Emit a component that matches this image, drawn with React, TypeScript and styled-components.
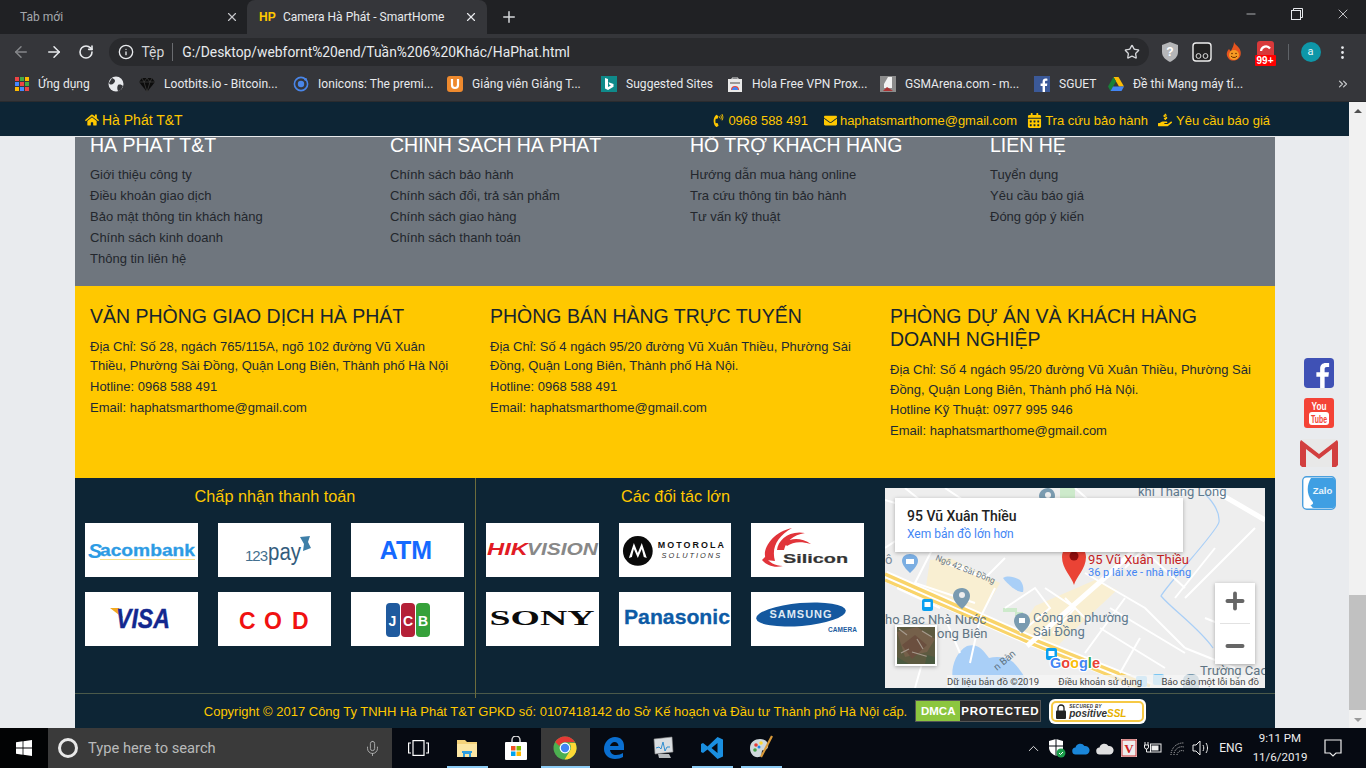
import React from "react";
import styled, { createGlobalStyle } from "styled-components";
import { ArrowLeft, ArrowRight, RotateCw, Info, Star, X, Plus, Minus, MoreVertical, ChevronsRight, ChevronUp, Mic } from "lucide-react";
import { FaHome, FaPhoneVolume, FaEnvelope, FaCalendarAlt, FaHandHoldingUsd } from "react-icons/fa";

const GlobalStyle = createGlobalStyle`
  html, body { margin: 0; padding: 0; overflow: hidden; background: #000; }
  * { box-sizing: border-box; }
`;

const UI = `Roboto, "Noto Sans", sans-serif`;
const WEB = `"Liberation Sans", Arial, sans-serif`;
const GOLD = "#ffc800";
const NAVY = "#0d2535";

const Screen = styled.div`
  width: 1366px; height: 768px; display: flex; flex-direction: column; overflow: hidden;
  font-family: ${WEB}; font-size: 13px;
`;
const TabStrip = styled.div`
  height: 34px; background: #202124; display: flex; align-items: stretch; color: #e8eaed; font: 12px ${UI};
`;
const Tab = styled.div<{ $active?: boolean }>`
  width: ${p => (p.$active ? 240 : 247)}px; display: flex; align-items: center;
  padding: ${p => (p.$active ? "0 9px 0 12px" : "0 8px 0 20px")};
  background: ${p => (p.$active ? "#35363a" : "transparent")};
  border-radius: 8px 8px 0 0; color: ${p => (p.$active ? "#e8eaed" : "#a5a8ad")};
`;
const TabTitle = styled.span`flex: 1; white-space: nowrap;`;
const Fav = styled.b`width: 24px; color: ${GOLD}; font: 700 12px ${WEB};`;
const NewTab = styled.div`width: 44px; display: flex; align-items: center; justify-content: center;`;
const WinControls = styled.div`margin-left: auto; display: flex;`;
const WinBtn = styled.div`width: 46px; display: flex; align-items: center; justify-content: center; padding-bottom: 6px;`;
const Toolbar = styled.div`
  height: 34px; background: #35363a; display: flex; align-items: center; padding: 2px 5px 0; color: #e8eaed;
`;
const NavBtn = styled.div<{ $dim?: boolean }>`
  width: 32.5px; display: flex; justify-content: center; color: ${p => (p.$dim ? "#85878a" : "#e8eaed")};
`;
const Omni = styled.div`
  margin-left: 6px; margin-right: 5px; width: 1040px; height: 28px; border-radius: 14px; background: #292a2d;
  display: flex; align-items: center; padding: 0 9px; font: 13.85px ${UI}; color: #e8eaed;
`;
const OmniDim = styled.span`margin-left: 8px; color: #d5d7da;`;
const OmniSep = styled.span`width: 1px; height: 18px; background: #6a6c70; margin: 0 9px 0 8px;`;
const OmniUrl = styled.span`flex: 1; white-space: nowrap;`;
const Ext = styled.div`width: 32px; display: flex; justify-content: center; align-items: center; position: relative;`;
const Badge = styled.span`
  position: absolute; left: 5px; top: 10px; width: 21px; height: 11px; background: #f00; color: #fff;
  font: 700 10px/11px ${WEB}; text-align: center; border-radius: 1px;
`;
const ToolSep = styled.span`width: 1px; height: 16px; background: #5f6368; margin: 0 12px 0 6px;`;
const Avatar = styled.span`
  width: 20px; height: 20px; border-radius: 50%; background: #0e97a8; color: #e8f6f8; font: 11px/19px ${UI}; text-align: center; margin-right: 6px;
`;
const Bookmarks = styled.div`
  height: 34px; background: #35363a; display: flex; align-items: center; padding: 0 0 2px 15px; color: #e8eaed;
  font: 12px ${UI}; letter-spacing: .05px; border-bottom: 1px solid #2a2b2e;
`;
const Mark = styled.div<{ $w: number }>`
  width: ${p => p.$w}px; display: flex; align-items: center; gap: 9px; white-space: nowrap;
`;
const MarkMore = styled.div`margin-left: 8px; color: #c8cacc; display: flex;`;
const Viewport = styled.div`flex: 1; display: flex; min-height: 0; position: relative;`;
const Page = styled.div`flex: 1; background: #e9ebee; display: flex; flex-direction: column; overflow: hidden; position: relative;`;
const TopNav = styled.nav`
  height: 35px; flex: none; background: ${NAVY}; border-bottom: 1px solid #e8eaec; color: ${GOLD};
  display: flex; align-items: center; padding: 2px 79px 0 85px; position: relative; z-index: 2;
`;
const Brand = styled.span`display: flex; align-items: center; gap: 3px; font-size: 14px;`;
const NavLinks = styled.div`margin-left: auto; display: flex; align-items: center; gap: 10px;`;
const NavLink = styled.span<{ $gap?: number; $after?: number }>`
  display: flex; align-items: center; gap: ${p => p.$gap ?? 3}px; white-space: nowrap; margin-right: ${p => p.$after ?? 0}px;
`;
const Container = styled.main`width: 1200px; margin-left: 75px;`;
const Gray = styled.section`
  background: #6f767e; height: 149px; display: grid; grid-template-columns: repeat(4, 300px);
`;
const LinkCol = styled.div`padding: 0 15px;`;
const LinkHead = styled.h3`
  margin: -3px 0 7px; font: 400 19.5px/23.4px ${WEB}; color: #fff; text-transform: uppercase;
`;
const LinkItem = styled.div`line-height: 21px; color: #23272d;`;
const Yellow = styled.section`
  background: ${GOLD}; height: 192px; padding-top: 19px; display: grid; grid-template-columns: repeat(3, 400px); color: #1d2a33;
`;
const Office = styled.div`padding: 0 15px;`;
const OfficeHead = styled.h3`margin: 0 0 8.5px; font: 400 19.5px/23.4px ${WEB}; text-transform: uppercase; color: #17242e;`;
const Address = styled.div`line-height: 19.5px;`;
const Line = styled.div`line-height: 21px;`;
const Partners = styled.section`
  background: ${NAVY}; height: 215px; display: grid; grid-template-columns: 400px 400px 400px;
`;
const LogoCol = styled.div<{ $divider?: boolean }>`
  padding: 8px 10px 0; border-left: ${p => (p.$divider ? "1px solid #6c6c3c" : "0")};
`;
const LogoTitle = styled.div`
  color: ${GOLD}; font-size: 16.25px; line-height: 20px; text-align: center; margin-bottom: 17px;
`;
const LogoGrid = styled.div<{ $mid?: number }>`
  display: grid; grid-template-columns: 113px ${p => p.$mid ?? 113}px 113px; column-gap: 20px; row-gap: 15px;
`;
const LogoCard = styled.div`height: 54px; background: #fff; display: flex; overflow: hidden;`;
const MapCol = styled.div`padding: 10px;`;
const MapBox = styled.div`width: 380px; height: 200px; position: relative; overflow: hidden; background: #efefef;`;
const InfoCard = styled.div`
  position: absolute; left: 10px; top: 10px; width: 288px; height: 54px; background: #fff; padding: 9px 12px;
  box-shadow: 0 1px 4px rgba(0,0,0,.3); font-family: ${UI};
`;
const InfoTitle = styled.div`font-size: 14px; font-weight: 500; line-height: 18px; color: #222;`;
const InfoLink = styled.div`font-size: 12px; line-height: 18px; color: #4285f4;`;
const ZoomBox = styled.div`
  position: absolute; left: 330px; top: 95px; width: 40px; height: 81px; background: #fff;
  display: flex; flex-direction: column; align-items: center; justify-content: space-around; color: #666;
  box-shadow: 0 1px 4px rgba(0,0,0,.3);
`;
const ZoomSep = styled.span`width: 30px; height: 1px; background: #e2e2e2;`;
const SatThumb = styled.div`
  position: absolute; left: 10px; top: 137px; width: 42px; height: 41px; border: 2px solid #fff; box-shadow: 0 1px 4px rgba(0,0,0,.3);
  display: flex;
`;
const Attribution = styled.div`
  position: absolute; right: 6px; bottom: 0; left: 62px; height: 13px; background: rgba(245,245,245,.75);
  display: flex; justify-content: space-between; font: 9.5px/13px ${UI}; color: #444; white-space: nowrap;
`;
const Copy = styled.section`
  background: ${NAVY}; border-top: 1px solid #4b5a4a; height: 35px; display: flex; align-items: center; justify-content: center;
  color: ${GOLD}; gap: 8px;
`;
const CopyText = styled.span`white-space: nowrap;`;
const Dmca = styled.span`
  display: flex; height: 22px; width: 126px; border: 1px solid #555; font: 700 11.5px/20px ${WEB}; color: #fff;
`;
const DmcaL = styled.span`width: 44px; background: #8cc63f; text-align: center;`;
const DmcaR = styled.span`flex: 1; background: #2d2d2d; text-align: center; letter-spacing: .8px;`;
const Ssl = styled.span`
  width: 97px; height: 25px; background: #fff; border-radius: 6px; padding: 2px; display: flex;
`;
const SslIn = styled.span`
  flex: 1; border: 2px solid #f6c945; border-radius: 5px; display: flex; align-items: center; padding-left: 3px; gap: 3px; color: #222;
`;
const SslText = styled.span`display: flex; flex-direction: column; font: italic 700 10px/9px ${WEB}; color: #333;`;
const SslSmall = styled.small`font-size: 4.5px; line-height: 5px; letter-spacing: .3px;`;
const SslHi = styled.span`color: #e8b100;`;
const Social = styled.div`
  position: absolute; right: 11px; top: 256px; width: 38px; display: flex; flex-direction: column; align-items: center; z-index: 3;
`;
const SocialItem = styled.div<{ $mt: number }>`margin-top: ${p => p.$mt}px; display: flex;`;
const Scrollbar = styled.div`width: 17px; background: #f1f1f1; display: flex; flex-direction: column; align-items: center;`;
const ScrollArrowBox = styled.div`height: 17px; width: 17px; display: flex; align-items: center; justify-content: center;`;
const Arrow = styled.span<{ $down?: boolean }>`
  width: 0; height: 0; border-left: 4px solid transparent; border-right: 4px solid transparent;
  ${p => (p.$down ? "border-top: 4px solid #9a9a9a;" : "border-bottom: 4px solid #505050;")}
`;
const ScrollTrack = styled.div`flex: 1; width: 100%; padding-top: 476px;`;
const Thumb = styled.div`height: 115px; background: #c1c1c1;`;
const Taskbar = styled.footer`
  height: 40px; background: #060a12; display: flex; align-items: stretch; color: #fff; font: 12px ${UI};
`;
const Start = styled.div`width: 48px; background: #020304; display: flex; align-items: center; justify-content: center;`;
const Search = styled.div`
  width: 344px; background: #3a3a3a; display: flex; align-items: center; padding: 0 11px 0 10px; gap: 10px;
  color: #b9babb; font-size: 14.7px;
`;
const SearchText = styled.span`flex: 1;`;
const Cortana = styled.span`width: 20px; height: 20px; border: 3px solid #e8e8e8; border-radius: 50%;`;
const TaskApps = styled.div`display: flex; margin-left: 1.5px;`;
const TaskApp = styled.div<{ $on?: boolean; $open?: boolean }>`
  width: 49px; display: flex; align-items: center; justify-content: center; position: relative;
  background: ${p => (p.$on ? "#3a3a3a" : "transparent")};
  &::after {
    content: ""; position: absolute; bottom: 0; height: 2px;
    left: ${p => (p.$on ? 0 : 4)}px; right: ${p => (p.$on ? 0 : 4)}px;
    background: ${p => (p.$open ? "#8ccbf4" : "transparent")};
  }
`;
const Tray = styled.div`margin-left: auto; display: flex; align-items: center; color: #eee; padding-right: 11px;`;
const TrayIcon = styled.div<{ $w?: number }>`width: ${p => p.$w ?? 24}px; display: flex; justify-content: center; align-items: center;`;
const Lang = styled.span`width: 36px; text-align: center; font-size: 12px;`;
const Clock = styled.div`width: 62px; text-align: center; line-height: 19px; font-size: 11.5px; white-space: nowrap;`;

const Apps = () => (
  <svg width="14" height="14" viewBox="0 0 14 14">
    {["#e44","#4a4","#fb0","#48f","#e44","#4a4","#fb0","#48f","#e44"].map((c, i) => (
      <rect key={i} x={(i % 3) * 5} y={Math.floor(i / 3) * 5} width="4" height="4" fill={c} />
    ))}
  </svg>
);
const Glob = () => (
  <svg width="16" height="16" viewBox="0 0 16 16"><circle cx="8" cy="8" r="7.5" fill="#e8eaed"/><path d="M4 2c3 1 4 3 2 5S2 9 1 7M10 9c2-1 4 0 5 1-1 3-3 5-5 5-1-2-1-4 0-6Z" fill="#35363a"/></svg>
);
const Gem = () => (
  <svg width="16" height="16" viewBox="0 0 16 16"><path d="M3 2h10l3 4-8 10L0 6Z" fill="#0c0c0c"/><path d="M0 6h16M5 6l3 10 3-10M3 2l2 4 3-4 3 4 2-4" stroke="#444" fill="none" strokeWidth=".7"/></svg>
);
const Ion = () => (
  <svg width="16" height="16" viewBox="0 0 16 16"><circle cx="8" cy="8" r="6.6" fill="none" stroke="#4a86e8" strokeWidth="1.6"/><circle cx="8" cy="8" r="3.2" fill="#4a86e8"/><circle cx="12.6" cy="3.4" r="1.4" fill="#4a86e8"/></svg>
);
const UIcon = () => (
  <svg width="16" height="16" viewBox="0 0 16 16"><rect width="16" height="16" rx="3" fill="#ee8a2e"/><path d="M5 3v6a3 3 0 0 0 6 0V3" fill="none" stroke="#fff" strokeWidth="2.2"/></svg>
);
const Bing = () => (
  <svg width="16" height="16" viewBox="0 0 16 16"><rect width="16" height="16" fill="#0f8a8a"/><path d="M4 2l3 1v8l3-1.5-1.5-.8-1-2.5 5 1.8v2.8L7 14l-3-1.500Z" fill="#fff"/></svg>
);
const Hola = () => (
  <svg width="16" height="16" viewBox="0 0 16 16"><rect x="1" y="3" width="14" height="13" fill="#e9e9e9"/><path d="M5 4V2h6v2" fill="none" stroke="#ddd"/><path d="M4 14a4 4 0 0 1 8 0Z" fill="#ea4335"/><path d="M5 14a3 3 0 0 1 6 0Z" fill="#4285f4"/><rect x="3" y="6" width="10" height="2" fill="#999"/></svg>
);
const Gsm = () => (
  <svg width="16" height="16" viewBox="0 0 16 16"><rect width="16" height="16" fill="#8c8c8c"/><path d="M8 1h4v11H4V8Z" fill="#f2f2f2"/><path d="M3 15l4-4 6 4Z" fill="#a33"/></svg>
);
const Fb = ({ s = 16, bg = "#3b5998" }: { s?: number; bg?: string }) => (
  <svg width={s} height={s} viewBox="0 0 16 16"><rect width="16" height="16" rx={s > 20 ? 2 : 0} fill={bg}/><path d="M11 16v-6h2l.3-2.4H11V6c0-.8.3-1.2 1.2-1.2h1.2V2.7c-.6-.1-1.2-.1-1.8-.1-1.8 0-3 1.1-3 3.1v1.9h-2V10h2v6Z" fill="#fff"/></svg>
);
const Drive = () => (
  <svg width="16" height="16" viewBox="0 0 16 16"><path d="M5.5 1h5L16 10.5h-5Z" fill="#fbbc04"/><path d="M5.5 1 0 10.5 2.5 15 8 5.5Z" fill="#188038"/><path d="M2.5 15h11l2.5-4.5H5Z" fill="#4285f4"/></svg>
);
const Shield = () => (
  <svg width="18" height="20" viewBox="0 0 18 20"><path d="M9 0l8 3v7c0 5-4 8-8 10-4-2-8-5-8-10V3Z" fill="#b5b6b8"/><text x="9" y="14" textAnchor="middle" fontSize="12" fontWeight="700" fontFamily="Liberation Sans" fill="#fff">?</text></svg>
);
const Ghost = () => (
  <svg width="20" height="20" viewBox="0 0 20 20"><rect x="1" y="1" width="18" height="18" rx="3" fill="#222" stroke="#eee" strokeWidth="1.4"/><circle cx="6.5" cy="14" r="2.4" fill="none" stroke="#ddd"/><circle cx="13.5" cy="14" r="2.4" fill="none" stroke="#ddd"/></svg>
);
const Flame = () => (
  <svg width="18" height="20" viewBox="0 0 18 20"><path d="M9 0c1 3 3 3 5 6 3 4 2 9-1 11-3 2-7 2-9 0-3-3-3-7 0-10 1 1 1 2 2 2 1-3 3-5 3-9Z" fill="#e7541e"/><circle cx="9" cy="13" r="5" fill="#f59a23"/><path d="M6 14c1 2 5 2 6 0" stroke="#6b2b00" fill="none"/><circle cx="7" cy="11.5" r=".8" fill="#6b2b00"/><circle cx="11" cy="11.5" r=".8" fill="#6b2b00"/></svg>
);
const RedC = () => (
  <svg width="18" height="18" viewBox="0 0 18 18" style={{ marginTop: -4 }}><rect width="17" height="18" rx="3" fill="#d8393a"/><path d="M4 10a5 5 0 0 1 9-2.5" fill="none" stroke="#fff" strokeWidth="2.2"/></svg>
);
const Restore = () => (
  <svg width="12" height="12" viewBox="0 0 12 12" fill="none" stroke="#e8eaed"><rect x=".5" y="2.5" width="9" height="9"/><path d="M2.500 2.500V.5h9v9H9.500"/></svg>
);
const Win = () => (
  <svg width="16" height="16" viewBox="0 0 16 16"><path d="M0 2.300 6.600 1.300v6.200H0ZM7.400 1.200 16 0v7.500H7.400ZM0 8.400h6.600v6.300L0 13.700ZM7.400 8.400H16V16l-8.600-1.200Z" fill="#fff"/></svg>
);
const TaskView = () => (
  <svg width="21" height="16" viewBox="0 0 21 16" fill="none" stroke="#fff" strokeWidth="1.2"><rect x="5" y=".6" width="11" height="14.8"/><path d="M3 3H.6v10H3M18 3h2.400v10H18"/></svg>
);
const Folder = () => (
  <svg width="22" height="22" viewBox="0 0 22 22"><path d="M1 3h8l2 2h10v15H1Z" fill="#f3d27a"/><rect x="1" y="7" width="20" height="13" fill="#fbe6a3"/><path d="M7 14h8v6h-2v-3H9v3H7Z" fill="#2f9fe0"/><rect x="6" y="14" width="10" height="2" fill="#2f9fe0"/></svg>
);
const Store = () => (
  <svg width="22" height="24" viewBox="0 0 22 24"><path d="M7 6V4a4 4 0 0 1 8 0v2" fill="none" stroke="#ddd" strokeWidth="1.4"/><rect x="0" y="6" width="22" height="18" rx="1" fill="#fff"/><rect x="6" y="10" width="4.5" height="4.5" fill="#f25022"/><rect x="11.5" y="10" width="4.5" height="4.5" fill="#7fba00"/><rect x="6" y="15.5" width="4.5" height="4.5" fill="#00a4ef"/><rect x="11.5" y="15.5" width="4.5" height="4.5" fill="#ffb900"/></svg>
);
const Chrome = () => (
  <svg width="24" height="24" viewBox="0 0 24 24"><circle cx="12" cy="12" r="11.5" fill="#4caf50"/><path d="M12 .5a11.500 11.500 0 0 1 10 5.700H12a6 6 0 0 0-5.700 3.900L2.200 6A11.500 11.500 0 0 1 12 .5Z" fill="#e53935"/><path d="M22.400 7a11.500 11.500 0 0 1-10.800 16.500L16.800 15A6 6 0 0 0 16.200 7Z" fill="#fdd835"/><circle cx="12" cy="12" r="5.400" fill="#fff"/><circle cx="12" cy="12" r="4.200" fill="#4285f4"/></svg>
);
const Edge = () => (
  <svg width="22" height="22" viewBox="0 0 22 22"><path d="M21 13H7c.3 3 3 5 6 5 3 0 5-1 7-2v4c-2 1-5 2-8 2C6 22 1 18 1 12 1 5 6 0 12 0c6 0 9 4 9 9ZM15.500 9c0-2-1.500-4-4-4-2 0-4 2-4.500 4Z" fill="#0a6fd0"/></svg>
);
const Monitor = () => (
  <svg width="24" height="24" viewBox="0 0 24 24"><path d="M3 3l18-2 1 15-18 2Z" fill="#d9dde0" stroke="#888" strokeWidth=".6"/><path d="M5 12l3-1 2 2 2-7 2 9 2-4 3 0" stroke="#2f8ed1" fill="none"/><path d="M7 18h11l2 4H8Z" fill="#b6babd"/></svg>
);
const VsCode = () => (
  <svg width="24" height="24" viewBox="0 0 24 24"><path d="M17.500 1 23 3.500v17L17.500 23 7.500 13.500 3 17l-2-1V8l2-1 4.500 3.500ZM17.500 7l-6 5 6 5Z" fill="#1a8fe0"/></svg>
);
const Palette = () => (
  <svg width="26" height="26" viewBox="0 0 26 26"><path d="M2 13c0-6 5-9 10-9 5 0 9 3 8 8-1 4-5 2-6 4-1 3 1 5-3 6-5 1-9-3-9-9Z" fill="#cfd8dc"/><circle cx="8" cy="10" r="1.800" fill="#e53935"/><circle cx="13" cy="8" r="1.800" fill="#fdd835"/><circle cx="7" cy="15" r="1.800" fill="#43a047"/><circle cx="11" cy="12" r="1.500" fill="#1e88e5"/><path d="M24 1 13 22" stroke="#d99a3a" strokeWidth="2.200"/></svg>
);
const DefShield = () => (
  <svg width="18" height="20" viewBox="0 0 18 20"><path d="M8 1l7 2v6c0 5-3 7-7 9-4-2-7-4-7-9V3Z" fill="#fff"/><path d="M8 1v17M1 8h14" stroke="#060a12"/><circle cx="13" cy="15" r="4.500" fill="#1b9e4b"/><path d="M11 15l1.500 1.500L15 14" stroke="#fff" fill="none"/></svg>
);
const Cloud = ({ c }: { c: string }) => (
  <svg width="18" height="13" viewBox="0 0 18 13"><path d="M4 12.500a3.500 3.500 0 0 1-.5-7A5 5 0 0 1 12.500 4 4.300 4.300 0 0 1 14 12.500Z" fill={c}/></svg>
);
const VBox = () => (
  <svg width="16" height="18" viewBox="0 0 16 18"><rect width="16" height="18" fill="#eee"/><rect x="1" y="1" width="14" height="16" fill="none" stroke="#c33"/><text x="8" y="14" textAnchor="middle" fontSize="13" fontWeight="700" fontFamily="Liberation Serif" fill="#c22">V</text></svg>
);
const Plug = () => (
  <svg width="18" height="14" viewBox="0 0 18 14" fill="none" stroke="#eee"><path d="M1 1v3M4 1v3M.5 4h4v2a2 2 0 0 1-4 0ZM2.500 8v3h4"/><rect x="6.500" y="3" width="10.500" height="8"/><rect x="8" y="5" width="6" height="4" fill="#eee"/></svg>
);
const Wifi = () => (
  <svg width="17" height="15" viewBox="0 0 17 15" fill="none" stroke="#ccc" strokeDasharray="1 1"><path d="M2 14a12 12 0 0 1 13-12M5 14a8 8 0 0 1 10-8M8 14a5 5 0 0 1 7-4"/></svg>
);
const Speaker = () => (
  <svg width="18" height="16" viewBox="0 0 18 16" fill="none" stroke="#eee"><path d="M1 5h3l4-4v14l-4-4H1ZM11 5c1 2 1 4 0 6M14 3c2 3 2 7 0 10"/></svg>
);
const Note = () => (
  <svg width="18" height="18" viewBox="0 0 18 18" fill="none" stroke="#eee" strokeWidth="1.200"><path d="M1 1h16v13h-5l-3 3-3-3H1Z"/></svg>
);

const txt = { fontFamily: "Liberation Sans", fontWeight: 700 } as const;
const L = ({ children }: { children: React.ReactNode }) => (
  <svg width="113" height="54" viewBox="0 0 113 54">{children}</svg>
);
const logos1 = [
  <L><text x="3" y="35" {...txt} fontSize="21" fontStyle="italic" fill="#2d9be4">S</text><text x="15" y="33" {...txt} fontSize="16.500" fill="#2d9be4" stroke="#2d9be4" strokeWidth=".3" textLength="95" lengthAdjust="spacingAndGlyphs">acombank</text><rect x="15" y="36" width="95" height="1" fill="#f5e08a"/></L>,
  <L><text x="27" y="38" fontFamily="Liberation Sans" fontSize="15" fill="#44708f" textLength="23">123</text><text x="50" y="37" fontFamily="Liberation Sans" fontSize="23" fill="#335c7c" textLength="33" lengthAdjust="spacingAndGlyphs">pay</text><path d="M82 14l10-1-2 6 3 6-8 3 1-7Z" fill="#3e7fa8"/></L>,
  <L><text x="55" y="36" textAnchor="middle" {...txt} fontSize="25" fill="#1569ff">ATM</text></L>,
  <L><path d="M25 16h9l4 10Z" fill="#f2a91e"/><text x="31" y="36" {...txt} fontStyle="italic" fontSize="28" fill="#13288f" stroke="#13288f" strokeWidth=".4" textLength="54" lengthAdjust="spacingAndGlyphs">VISA</text></L>,
  <L><text x="21 46 74" y="37" {...txt} fontSize="23" fill="#f01111">COD</text></L>,
  <L><rect x="35" y="11" width="14" height="34" rx="4" fill="#1f5a9e"/><rect x="50" y="11" width="14" height="34" rx="4" fill="#b42037"/><rect x="65" y="11" width="14" height="34" rx="4" fill="#36a13a"/><text x="37.500 52 67" y="34" {...txt} fontSize="14" fill="#fff">JCB</text></L>,
];
const logos2 = [
  <L><text x="1" y="32" {...txt} fontStyle="italic" fontSize="17" fill="#e11b24" textLength="41" lengthAdjust="spacingAndGlyphs">HIK</text><text x="41" y="32" {...txt} fontStyle="italic" fontSize="17" fill="#888" textLength="71" lengthAdjust="spacingAndGlyphs">VISION</text></L>,
  <L><circle cx="19" cy="28" r="15" fill="#0a0a0a"/><path d="M10 35 15 20l4 10 4-10 5 15-3-1-2-8-4 9-4-9-2 8Z" fill="#fff"/><text x="39" y="25" {...txt} fontSize="9" fill="#111" textLength="67">MOTOROLA</text><text x="43" y="35" fontFamily="Liberation Sans" fontStyle="italic" fontSize="7.500" fill="#333" textLength="59">SOLUTIONS</text></L>,
  <L><path d="M15 37C10 26 22 9 41 5 27 13 20 24 24 38ZM26 27C27 17 38 7 54 10 42 12 35 18 33 27ZM33 20C41 14 51 15 60 21 49 18 42 19 36 23ZM14 34c4 5 10 9 18 9-8 2-16 0-21-6Z" fill="#e1343a"/><text x="32" y="40" {...txt} fontSize="13" fill="#333" stroke="#333" strokeWidth=".2" textLength="65" lengthAdjust="spacingAndGlyphs">Silicon</text></L>,
  <L><text x="56" y="33" textAnchor="middle" fontFamily="Liberation Serif" fontWeight="700" fontSize="21" fill="#0b0b0b" textLength="105" lengthAdjust="spacingAndGlyphs">SONY</text></L>,
  <L><text x="5" y="32" {...txt} fontSize="21" fill="#0d5ba6" stroke="#0d5ba6" strokeWidth=".3" textLength="107" lengthAdjust="spacingAndGlyphs">Panasonic</text></L>,
  <L><ellipse cx="50" cy="22.500" rx="45" ry="11.500" fill="#14589f" transform="rotate(-5 50 22.500)"/><text x="50" y="26" textAnchor="middle" {...txt} fontSize="11" fill="#dfe9f3" letterSpacing="1">SAMSUNG</text><text x="77" y="40" {...txt} fontSize="6.500" fill="#1d5c9e" textLength="29">CAMERA</text></L>,
];

const MapArt = () => {
  const thin: string[] = [
    "M0 12 40 24 90 52M20 0 70 40M0 60 30 40M48 60 30 95 90 115M60 75 100 90 120 70M110 100 95 130 85 175M100 90 70 75",
    "M120 120 150 100 165 120 135 145M160 100 190 120 168 145M180 110 205 135M200 85 260 120 300 160M225 120 300 165M215 140 280 180M240 110 200 165",
    "M300 0 270 50 240 80M245 50 300 100M330 60 290 110M370 40 300 110M300 160 350 180M255 150 235 185M320 130 370 150M60 130 75 165M40 165 30 200",
    "M150 30 190 60M190 0 235 40M60 0 120 40M0 130 60 150M12 100 55 120",
  ];
  return (
    <svg width="380" height="200" viewBox="0 0 380 200" style={{ display: "block" }}>
      <rect width="380" height="200" fill="#eeeeee"/>
      <path d="M45 72 65 70 115 95 95 130 40 105ZM150 118 210 92 232 102 170 160 130 150Z" fill="#f9efd2"/>
      <path d="M118 90c5-3 12-1 17 2 3 4 4 8 3 12-6 0-14-6-20-14Z" fill="#a9cff7"/>
      <path d="M82 158c10-3 15 2 22 12 8-2 18-1 24 4 8 8 14 18 16 26H70c-6-14-2-34 12-42Z" fill="#a9cff7"/>
      <path d="M175 0h15v14h-15Z" fill="#cdeacb"/>
      <path d="M118 120h14v4h-14ZM130 124h8v4h-8Z" fill="#cdeacb"/>
      <path d="M320 6c8 8 15 18 14 28-2 10-50 60-58 74 12 14 38 32 52 52" fill="none" stroke="#a9cff7" strokeWidth="1.200"/>
      <path d="M0 88 145 152 265 200" fill="none" stroke="#fff" strokeWidth="11"/>
      <path d="M0 86 145 150 265 198" fill="none" stroke="#f9d46a" strokeWidth="3.500"/>
      <path d="M0 92 145 155 255 200" fill="none" stroke="#f9d46a" strokeWidth="3"/>
      <path d="M142 158 222 88 262 50M325 0 380 32" fill="none" stroke="#fff" strokeWidth="5"/>
      {thin.map((d, i) => <path key={i} d={d} fill="none" stroke="#fff" strokeWidth="2"/>)}
      <path d="M163 0c-5 0-9 4-9 8 0 5 9 12 9 12s7-7 7-12c0-4-3-8-7-8Z" fill="#7a9bb0"/><circle cx="163" cy="7" r="3" fill="#eee"/>
      <path d="M25 66c-5 0-8 3-8 7 0 5 8 12 8 12s8-7 8-12c0-4-3-7-8-7Z" fill="#7baee2"/><rect x="21" y="71" width="8" height="5" fill="#fff"/>
      <path d="M77 100c-6 0-9 4-9 8 0 6 9 13 9 13s8-7 8-13c0-4-3-8-8-8Z" fill="#7a9bb0"/><circle cx="77" cy="107" r="3" fill="#eee"/>
      <path d="M137 125c-5 0-8 4-8 8 0 6 8 12 8 12s8-6 8-12c0-4-3-8-8-8Z" fill="#7a9bb0"/><rect x="134" y="130" width="6" height="5" fill="#fff"/>
      <rect x="37" y="111" width="11" height="12" rx="2" fill="#0aa0f0"/><rect x="39.500" y="114" width="6" height="5" fill="#fff"/>
      <rect x="161" y="160" width="11" height="12" rx="2" fill="#0aa0f0"/><rect x="163.500" y="163" width="6" height="5" fill="#fff"/>
      <rect x="251" y="188" width="11" height="11" rx="2" fill="#7bc6f2"/><rect x="268" y="186" width="11" height="11" rx="2" fill="#7bc6f2"/>
      <g fontFamily="Roboto" fill="#5f7a8e" fontSize="13">
        <text x="253" y="8">khi Thăng Long</text>
        <text x="148" y="134">Công an phường</text>
        <text x="148" y="148">Sài Đồng</text>
        <text x="0" y="136" fill="#607483">ho Bạc Nhà Nước</text>
        <text x="52" y="150" fill="#607483">ong Biên</text>
        <text x="315" y="187" fill="#607483">Trường Cao</text>
        <text x="0" y="76" fill="#7a8a98">ô</text>
        <text x="112" y="183" transform="rotate(-40 112 183)" fill="#607483" fontSize="10">n Bàn</text>
        <text x="50" y="72" fontSize="8.500" fill="#6b7a86" transform="rotate(22 50 72)">Ngõ 42 Sài Đồng</text>
      </g>
      <path d="M306 186c-5 0-8 2-8 7v7h16v-7c0-5-3-7-8-7Z" fill="#7a9bb0"/>
      <path d="M189 97c-2-8-12-16-12-28 0-7 5-12 12-12s12 5 12 12c0 12-10 20-12 28Z" fill="#ea4335"/>
      <circle cx="189" cy="68" r="4.500" fill="#8f0d0d"/>
      <text x="203" y="76" fontFamily="Roboto" fontSize="13" fill="#c5221f">95 Vũ Xuân Thiều</text>
      <text x="203" y="88" fontFamily="Roboto" fontSize="11" fill="#4285f4">36 p lái xe - nhà riêng</text>
      <text x="165" y="180" fontFamily="Liberation Sans" fontWeight="700" fontSize="14.500" stroke="#fff" strokeWidth="2.500" paintOrder="stroke">
        <tspan fill="#4285f4">G</tspan><tspan fill="#ea4335">o</tspan><tspan fill="#fbbc05">o</tspan><tspan fill="#4285f4">g</tspan><tspan fill="#34a853">l</tspan><tspan fill="#ea4335">e</tspan>
      </text>
    </svg>
  );
};
const Sat = () => (
  <svg width="38" height="37" viewBox="0 0 38 37">
    <rect width="38" height="37" fill="#5d5a40"/>
    <path d="M0 5 20 0 38 12 30 25 8 30Z" fill="#75604a"/>
    <path d="M5 18 18 8 30 18 15 32Z" fill="#6b4f3f"/>
    <path d="M2 2 10 8M15 25 32 30M25 4 35 10M4 26 12 22M20 12 26 22" stroke="#a5998c" strokeWidth="1.200"/>
    <path d="M0 30 12 37H0ZM30 28l8 2v7H28Z" fill="#4a5a40"/>
  </svg>
);

const FbSocial = () => <Fb s={30} bg="#3f51b5" />;
const YouTube = () => (
  <svg width="30" height="30" viewBox="0 0 30 30"><rect width="30" height="30" rx="3" fill="#f44336"/><text x="15" y="12" textAnchor="middle" fontFamily="Liberation Sans" fontWeight="700" fontSize="11" fill="#fff" textLength="15" lengthAdjust="spacingAndGlyphs">You</text><rect x="5" y="14" width="20" height="13" rx="3" fill="#fff"/><text x="15" y="25" textAnchor="middle" fontFamily="Liberation Sans" fontWeight="700" fontSize="10.500" fill="#f44336" textLength="16" lengthAdjust="spacingAndGlyphs">Tube</text></svg>
);
const Gmail = () => (
  <svg width="38" height="28" viewBox="0 0 38 28"><path d="M3 0h32l3 3v23l-2 2H2l-2-2V3Z" fill="#e8e8e8"/><path d="M1 1 19 15 37 1l1 2v23l-2 2h-4V10L19 20 6 10v18H2l-2-2V3Z" fill="#d23f3f"/></svg>
);
const Zalo = () => (
  <svg width="34" height="34" viewBox="0 0 34 34"><rect x=".7" y=".7" width="32.600" height="32.600" rx="4" fill="#fff" stroke="#4a9fde" strokeWidth="1.400"/><path d="M9 2h22a2 2 0 0 1 2 2v26a2 2 0 0 1-2 2H12c-3 0-2-3-4-3 3 0 4-2 2-4C4 18 5 8 9 2Z" fill="#3f9fe3"/><text x="20.500" y="18" textAnchor="middle" fontFamily="Liberation Sans" fontWeight="700" fontSize="9.500" fill="#e8f4fc">Zalo</text></svg>
);

const marks: { w: number; icon: React.ReactNode; label?: string }[] = [
  { w: 93, icon: <Apps />, label: "Ứng dụng" },
  { w: 31, icon: <Glob /> },
  { w: 154, icon: <Gem />, label: "Lootbits.io - Bitcoin..." },
  { w: 154, icon: <Ion />, label: "Ionicons: The premi..." },
  { w: 154, icon: <UIcon />, label: "Giảng viên Giảng T..." },
  { w: 126, icon: <Bing />, label: "Suggested Sites" },
  { w: 153, icon: <Hola />, label: "Hola Free VPN Prox..." },
  { w: 154, icon: <Gsm />, label: "GSMArena.com - m..." },
  { w: 74, icon: <Fb />, label: "SGUET" },
  { w: 220, icon: <Drive />, label: "Đề thi Mạng máy tí..." },
];
const policies = [
  { h: "Hà Phát T&T", l: ["Giới thiệu công ty", "Điều khoản giao dịch", "Bảo mật thông tin khách hàng", "Chính sách kinh doanh", "Thông tin liên hệ"] },
  { h: "Chính sách Hà Phát", l: ["Chính sách bảo hành", "Chính sách đổi, trả sản phẩm", "Chính sách giao hàng", "Chính sách thanh toán"] },
  { h: "Hỗ trợ khách hàng", l: ["Hướng dẫn mua hàng online", "Tra cứu thông tin bảo hành", "Tư vấn kỹ thuật"] },
  { h: "Liên hệ", l: ["Tuyển dụng", "Yêu cầu báo giá", "Đóng góp ý kiến"] },
];
const offices = [
  { h: "Văn phòng giao dịch Hà Phát", a: "Địa Chỉ: Số 28, ngách 765/115A, ngõ 102 đường Vũ Xuân Thiều, Phường Sài Đồng, Quận Long Biên, Thành phố Hà Nội", t: "Hotline: 0968 588 491" },
  { h: "Phòng bán hàng trực tuyến", a: "Địa Chỉ: Số 4 ngách 95/20 đường Vũ Xuân Thiều, Phường Sài Đồng, Quận Long Biên, Thành phố Hà Nội.", t: "Hotline: 0968 588 491" },
  { h: "Phòng dự án và khách hàng doanh nghiệp", a: "Địa Chỉ: Số 4 ngách 95/20 đường Vũ Xuân Thiều, Phường Sài Đồng, Quận Long Biên, Thành phố Hà Nội.", t: "Hotline Kỹ Thuật: 0977 995 946" },
];

export default function App() {
  return (
    <Screen>
      <GlobalStyle />
      <TabStrip>
        <Tab><TabTitle>Tab mới</TabTitle><X size={14} color="#c4c6c9" /></Tab>
        <Tab $active><Fav>HP</Fav><TabTitle>Camera Hà Phát - SmartHome</TabTitle><X size={14} color="#e8eaed" /></Tab>
        <NewTab><Plus size={18} color="#d5d7da" /></NewTab>
        <WinControls>
          <WinBtn><Minus size={14} strokeWidth={1.2} /></WinBtn>
          <WinBtn><Restore /></WinBtn>
          <WinBtn><X size={16} strokeWidth={1.2} /></WinBtn>
        </WinControls>
      </TabStrip>
      <Toolbar>
        <NavBtn $dim><ArrowLeft size={18} /></NavBtn>
        <NavBtn><ArrowRight size={18} /></NavBtn>
        <NavBtn><RotateCw size={16} strokeWidth={2.4} /></NavBtn>
        <Omni>
          <Info size={16} />
          <OmniDim>Tệp</OmniDim><OmniSep />
          <OmniUrl>G:/Desktop/webfornt%20end/Tuần%206%20Khác/HaPhat.html</OmniUrl>
          <Star size={16} color="#d5d7da" />
        </Omni>
        <Ext><Shield /></Ext>
        <Ext><Ghost /></Ext>
        <Ext><Flame /></Ext>
        <Ext><RedC /><Badge>99+</Badge></Ext>
        <ToolSep />
        <Avatar>a</Avatar>
        <Ext><MoreVertical size={17} color="#e8eaed" /></Ext>
      </Toolbar>
      <Bookmarks>
        {marks.map((m, i) => <Mark key={i} $w={m.w}>{m.icon}{m.label && <span>{m.label}</span>}</Mark>)}
        <MarkMore><ChevronsRight size={14} /></MarkMore>
      </Bookmarks>
      <Viewport>
        <Page>
          <TopNav>
            <Brand><FaHome size={14} />Hà Phát T&amp;T</Brand>
            <NavLinks>
              <NavLink $after={6}><FaPhoneVolume size={13} />0968 588 491</NavLink>
              <NavLink><FaEnvelope size={13} />haphatsmarthome@gmail.com</NavLink>
              <NavLink $gap={3}><FaCalendarAlt size={15} />Tra cứu bảo hành</NavLink>
              <NavLink $gap={4}><FaHandHoldingUsd size={14} />Yêu cầu báo giá</NavLink>
            </NavLinks>
          </TopNav>
          <Container>
            <Gray>
              {policies.map(c => (
                <LinkCol key={c.h}>
                  <LinkHead>{c.h}</LinkHead>
                  {c.l.map(x => <LinkItem key={x}>{x}</LinkItem>)}
                </LinkCol>
              ))}
            </Gray>
            <Yellow>
              {offices.map(o => (
                <Office key={o.h}>
                  <OfficeHead>{o.h}</OfficeHead>
                  <Address>{o.a}</Address>
                  <Line>{o.t}</Line>
                  <Line>Email: haphatsmarthome@gmail.com</Line>
                </Office>
              ))}
            </Yellow>
            <Partners>
              <LogoCol>
                <LogoTitle>Chấp nhận thanh toán</LogoTitle>
                <LogoGrid>{logos1.map((l, i) => <LogoCard key={i}>{l}</LogoCard>)}</LogoGrid>
              </LogoCol>
              <LogoCol $divider>
                <LogoTitle>Các đối tác lớn</LogoTitle>
                <LogoGrid $mid={112}>{logos2.map((l, i) => <LogoCard key={i}>{l}</LogoCard>)}</LogoGrid>
              </LogoCol>
              <MapCol>
                <MapBox>
                  <MapArt />
                  <InfoCard>
                    <InfoTitle>95 Vũ Xuân Thiều</InfoTitle>
                    <InfoLink>Xem bản đồ lớn hơn</InfoLink>
                  </InfoCard>
                  <ZoomBox><Plus size={26} strokeWidth={3.5} /><ZoomSep /><Minus size={26} strokeWidth={3.5} /></ZoomBox>
                  <SatThumb><Sat /></SatThumb>
                  <Attribution>
                    <span>Dữ liệu bản đồ ©2019</span><span>Điều khoản sử dụng</span><span>Báo cáo một lỗi bản đồ</span>
                  </Attribution>
                </MapBox>
              </MapCol>
            </Partners>
            <Copy>
              <CopyText>Copyright © 2017 Công Ty TNHH Hà Phát T&amp;T GPKD số: 0107418142 do Sở Kế hoạch và Đầu tư Thành phố Hà Nội cấp.</CopyText>
              <Dmca><DmcaL>DMCA</DmcaL><DmcaR>PROTECTED</DmcaR></Dmca>
              <Ssl><SslIn>
                <svg width="10" height="15" viewBox="0 0 10 15"><path d="M2 7V4a3 3 0 0 1 6 0v3" fill="none" stroke="#222" strokeWidth="1.300"/><rect y="6.500" width="10" height="8.500" rx="1" fill="#222"/></svg>
                <SslText><SslSmall>SECURED BY</SslSmall><span>positive<SslHi>SSL</SslHi></span></SslText>
              </SslIn></Ssl>
            </Copy>
          </Container>
          <Social>
            <SocialItem $mt={0}><FbSocial /></SocialItem>
            <SocialItem $mt={10}><YouTube /></SocialItem>
            <SocialItem $mt={11}><Gmail /></SocialItem>
            <SocialItem $mt={9}><Zalo /></SocialItem>
          </Social>
        </Page>
        <Scrollbar>
          <ScrollArrowBox><Arrow /></ScrollArrowBox>
          <ScrollTrack><Thumb /></ScrollTrack>
          <ScrollArrowBox><Arrow $down /></ScrollArrowBox>
        </Scrollbar>
      </Viewport>
      <Taskbar>
        <Start><Win /></Start>
        <Search><Cortana /><SearchText>Type here to search</SearchText><Mic size={17} strokeWidth={1.2} /></Search>
        <TaskApps>
          <TaskApp><TaskView /></TaskApp>
          <TaskApp $open><Folder /></TaskApp>
          <TaskApp><Store /></TaskApp>
          <TaskApp $on $open><Chrome /></TaskApp>
          <TaskApp><Edge /></TaskApp>
          <TaskApp><Monitor /></TaskApp>
          <TaskApp $open><VsCode /></TaskApp>
          <TaskApp $open><Palette /></TaskApp>
        </TaskApps>
        <Tray>
          <TrayIcon><ChevronUp size={17} strokeWidth={1.3} /></TrayIcon>
          <TrayIcon><DefShield /></TrayIcon>
          <TrayIcon><Cloud c="#1a86d9" /></TrayIcon>
          <TrayIcon><Cloud c="#e0e0e0" /></TrayIcon>
          <TrayIcon><VBox /></TrayIcon>
          <TrayIcon><Plug /></TrayIcon>
          <TrayIcon><Wifi /></TrayIcon>
          <TrayIcon><Speaker /></TrayIcon>
          <Lang>ENG</Lang>
          <Clock>9:11 PM<br />11/6/2019</Clock>
          <TrayIcon $w={44}><Note /></TrayIcon>
        </Tray>
      </Taskbar>
    </Screen>
  );
}
